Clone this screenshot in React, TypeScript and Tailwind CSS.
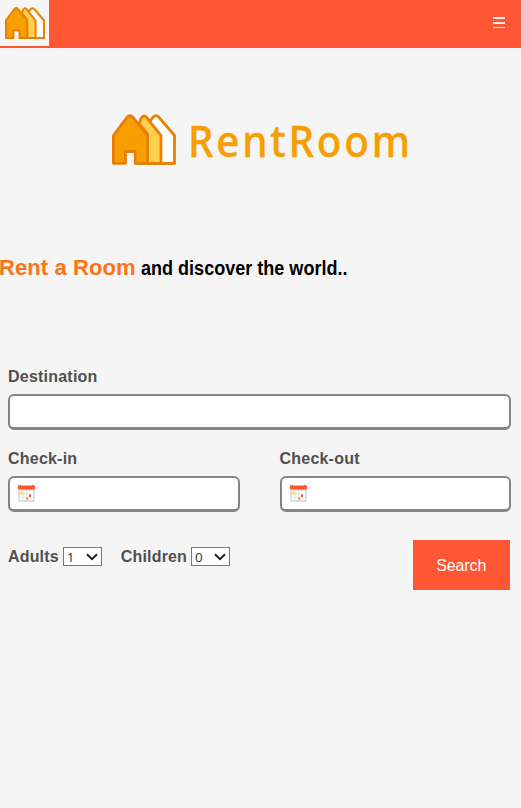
import React from "react";

function Houses({ className, strokeWidth = 2.8 }: { className: string; strokeWidth?: number }) {
  return (
    <svg viewBox="0 0 64 51" className={className} fill="none" stroke="#e98006" strokeWidth={strokeWidth} strokeLinejoin="round" strokeLinecap="round">
      <path d="M40 49.300V18L45.500 14L54 3.300Q57 .2 60 3.300L75.500 21.500V49.300Z" transform="translate(-13)" fill="#fff" />
      <path d="M35.500 49.300V20L27 10L29 4.500Q31.500 .2 34.500 3.300L49 21.500V49.300Z" fill="#ffcf50" />
      <path d="M1.400 49.300V21.500L15 3.300Q18 -.2 21 3.300L35.500 21.500V49.300H23.300V37.500H13.500V49.300Z" fill="#f79e00" />
      <path d="M23.300 49.300H62.500" />
    </svg>
  );
}

function CalendarIcon() {
  return (
    <svg viewBox="0 0 17 17" className="block h-[17px] w-[17px]">
      <path d="M0 4h17v13H0z" fill="#dcdee6" />
      <path d="M2 6h13v9H2z" fill="#fff" />
      <path d="M2 9h13M2 12h13M5.200 6v9M8.500 6v9M11.700 6v9" stroke="#e0e1e8" strokeWidth=".8" />
      <path d="M0 .5h17V4.500H0z" fill="#ff5630" />
      <path d="M1.500 0h1.500v1.300H1.500zM14 0h1.500v1.300H14z" fill="#a77972" />
      <path d="M2.300 6.800h2.700V9.300H2.300z" fill="#ffda44" />
      <path d="M10.800 9.500h2.400v2.400h-2.400z" fill="#ff5a35" />
      <path d="M7.800 12.500h2.400v2.400H7.800z" fill="#ffa035" />
    </svg>
  );
}

function Field({ label, calendar = false }: { label: string; calendar?: boolean }) {
  return (
    <div>
      <div className="h-[27px] pt-px text-[16px] leading-[18px] font-bold tracking-[0.22px]">{label}</div>
      <div className="flex h-[36px] items-center rounded-[6px] border-2 border-b-[3px] border-[#858585] bg-white pl-2">
        {calendar && <CalendarIcon />}
      </div>
    </div>
  );
}

function Count({ value }: { value: string }) {
  return (
    <div className="ml-1 flex h-[19px] w-[39px] items-center justify-between border border-[#777] bg-white pr-[3px] pl-[3px] font-['Open_Sans',sans-serif] text-[13.5px] leading-none font-normal tracking-normal text-[#333]">
      <span className="translate-y-px">{value}</span>
      <svg viewBox="0 0 12 8" className="h-[8px] w-[12px]" fill="none" stroke="#222" strokeWidth="2">
        <path d="M1 1.200L6 6.200L11 1.200" />
      </svg>
    </div>
  );
}

export default function App() {
  return (
    <div className="h-[808px] w-[521px] overflow-hidden bg-[#f5f5f5] font-['Liberation_Sans',Arial,sans-serif] text-[#505050]">
      <header className="flex h-[48px] items-start justify-between bg-[#ff5733]">
        <div className="h-[46px] w-[49px] bg-[#f5f5f5] pt-[7px] pl-[5px]">
          <Houses className="block h-[32px] w-[40px]" strokeWidth={3.2} />
        </div>
        <svg viewBox="0 0 12 11" className="mt-[17px] mr-[16px] h-[11px] w-[12px]" fill="#ffebe5">
          <path d="M0 0h12v2H0zM0 5h12v2H0zM0 10h12v1H0z" />
        </svg>
      </header>

      <div className="flex h-[207px] items-start pt-[66px] pl-[112px]">
        <Houses className="block h-[51px] w-[64px] shrink-0" />
        <div className="ml-[12px] origin-left scale-x-[.918] font-['Noto_Sans','Open_Sans',sans-serif] text-[44px] leading-[52px] font-medium tracking-[3px] whitespace-nowrap text-[#f79e00] [-webkit-text-stroke:0.4px_#f79e00]">RentRoom</div>
      </div>

      <h1 className="flex h-[112px] items-baseline leading-[26px] font-bold whitespace-nowrap text-black">
        <span className="ml-[-1px] block w-[141.500px] text-[22px] tracking-[0.1px] text-[#ff7315]">Rent a Room</span>
        <span className="block origin-left scale-x-[.925] text-[19.5px]">and discover the world..</span>
      </h1>

      <form className="px-2">
        <div className="mr-[2px]"><Field label="Destination" /></div>
        <div className="mt-[19px] mr-[2px] grid grid-cols-2 gap-[40px]">
          <Field label="Check-in" calendar />
          <Field label="Check-out" calendar />
        </div>
        <div className="mt-[28px] flex items-start">
          <div className="mt-[7px] flex items-center text-[16px] leading-[19px] font-bold tracking-[0.17px]">
            <span>Adults</span>
            <Count value="1" />
            <span className="ml-[19px]">Children</span>
            <Count value="0" />
          </div>
          <button type="button" className="mr-[3.5px] ml-auto h-[50px] w-[96.5px] bg-[#ff5733] pt-[2px] text-[16px] tracking-[-0.15px] text-white">Search</button>
        </div>
      </form>
    </div>
  );
}
